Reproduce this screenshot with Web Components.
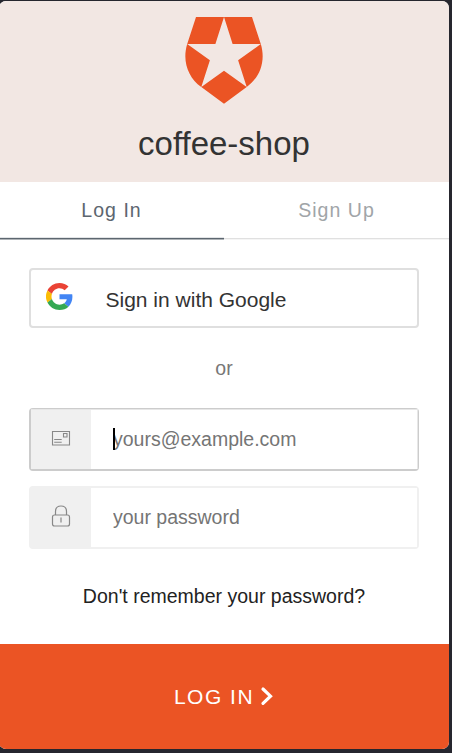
<!DOCTYPE html>
<html lang="en">
<head>
<meta charset="utf-8">
<title>coffee-shop</title>
<style>
html,body{margin:0;height:100%;overflow:hidden;background:#26262e}
body{font-family:"Liberation Sans",Arial,sans-serif;font-size:19.5px}
</style>
</head>
<body>
<login-card>
  <brand-header slot="header">coffee-shop</brand-header>
  <tab-bar slot="tabs"><tab-item active>Log In</tab-item><tab-item>Sign Up</tab-item></tab-bar>
  <google-button>Sign in with Google</google-button>
  <or-divider>or</or-divider>
  <icon-field focused placeholder="yours@example.com"><svg slot="icon" width="20" height="17" viewBox="0 0 20 17" fill="none" stroke="#888" stroke-width="1.1"><path d="M1.500 1.500h17v13.500h-17zM12.500 3.500h3.500v3.500h-3.500zM3.200 9.500h7.500M3.200 12.300h7.500"/></svg></icon-field>
  <icon-field placeholder="your password"><svg slot="icon" width="20" height="22" viewBox="0 0 20 22" fill="none" stroke="#888" stroke-width="1.2"><path d="M3 10h13.500q2 0 2 2v7q0 2-2 2H3.500q-2 0-2-2v-7q0-2 2-2zM4.500 10V6.500q0-5.500 5.500-5.500t5.500 5.500V10M10 12.500v5"/></svg></icon-field>
  <forgot-link>Don't remember your password?</forgot-link>
  <submit-bar slot="footer">LOG IN</submit-bar>
</login-card>
<script>
const define = (name, html) => customElements.define(name, class extends HTMLElement {
  constructor() {
    super();
    this.attachShadow({mode: "open"}).innerHTML = html;
  }
  connectedCallback() {
    const input = this.shadowRoot.querySelector("input");
    if (input) input.placeholder = this.getAttribute("placeholder");
  }
});
define("login-card", `<style>
:host{display:flex;flex-direction:column;box-sizing:border-box;width:450px;height:748px;margin:1px 0 0 -1px;background:#fff;border-radius:7px;overflow:hidden}
main{flex:1;display:flex;flex-direction:column;padding:28px 30px 0}
</style><slot name="header"></slot><slot name="tabs"></slot><main><slot></slot></main><slot name="footer"></slot>`);
define("brand-header", `<style>
:host{display:flex;flex-direction:column;align-items:center;height:181px;background:#f2e7e3;color:#333;font-size:33px;line-height:38px}
svg{display:block;margin:16px 0 21px}
</style><svg width="78" height="87" viewBox="0 0 78 87" fill="#eb5424"><path d="M11 0h28l-8.600 27H2.200zM39 0h28l8.800 27H47.600zM2.200 27L24.900 43.300 16.300 70C3 60.500-3 44 2.200 27zM75.800 27L53.100 43.300 61.700 70C75 60.500 81 44 75.800 27zM39 53.700L61.700 70 39 86.800 16.300 70z"/></svg><span><slot></slot></span>`);
define("tab-bar", `<style>:host{display:flex;height:58px}</style><slot></slot>`);
define("tab-item", `<style>
:host{display:flex;box-sizing:border-box;flex:1;align-items:center;justify-content:center;letter-spacing:1.05px;color:#a1a5a8;padding-bottom:2px;background:linear-gradient(#e0e0e0 50%,#f5f5f5 50%) bottom/100% 2px no-repeat}
:host([active]){color:#5c666f;background-image:linear-gradient(#e3e5e7 33.33%,#5c666f 33.33% 66.67%,#aeb3b7 66.67%);background-size:100% 3px}
</style><span><slot></slot></span>`);
define("google-button", `<style>
:host{display:flex;box-sizing:border-box;height:60px;flex:none;align-items:center;border:2px solid #dfdfdf;border-radius:4px;padding-left:15px;font-size:21px;color:#333}
svg{flex:none;margin-right:32.500px;margin-top:-3px}span{line-height:24px;margin-top:4px}
</style><svg width="27" height="27" viewBox="0 0 48 48"><path fill="#EA4335" d="M24 9.500c3.540 0 6.710 1.220 9.210 3.600l6.850-6.850C35.900 2.380 30.470 0 24 0 14.620 0 6.510 5.380 2.560 13.220l7.980 6.190C12.430 13.720 17.740 9.500 24 9.500z"/><path fill="#4285F4" d="M46.980 24.550c0-1.570-.15-3.090-.38-4.550H24v9.020h12.940c-.58 2.960-2.260 5.480-4.780 7.180l7.730 6c4.510-4.180 7.090-10.360 7.090-17.650z"/><path fill="#FBBC05" d="M10.530 28.590a14.500 14.500 0 0 1 0-9.180l-7.980-6.190a24 24 0 0 0 0 21.560z"/><path fill="#34A853" d="M24 48c6.480 0 11.930-2.130 15.890-5.810l-7.730-6c-2.150 1.450-4.920 2.300-8.160 2.300-6.260 0-11.570-4.220-13.470-9.910l-7.980 6.190C6.510 42.620 14.620 48 24 48z"/></svg><span><slot></slot></span>`);
define("or-divider", `<style>:host{display:flex;flex:none;height:80px;justify-content:center;align-items:center;color:#777}</style><span><slot></slot></span>`);
define("icon-field", `<style>
:host{display:flex;flex:none;box-sizing:border-box;position:relative;height:63px;border:2px solid #f0f0f0;border-radius:4px;margin-bottom:15px}
:host([focused]){border-color:#ccc}
:host([focused])::after{content:"";position:absolute;inset:-1px -1px 0 0;border-top:1px solid #fff8;border-right:1px solid #fff8}
.icon{display:flex;width:60px;box-sizing:border-box;padding-bottom:3px;align-items:center;justify-content:center;background:#f0f0f0}
:host([focused]) .icon{padding-bottom:2px}
input{flex:1;min-width:0;border:0;outline:0;background:#fff;padding:0 0 0 22px;font:19.5px "Liberation Sans",Arial,sans-serif}
input::placeholder{color:#757575;opacity:1}
.caret{display:none;position:absolute;left:82px;top:18px;width:2px;height:22px;background:#000}
:host([focused]) .caret{display:block}
</style><div class="icon"><slot name="icon"></slot></div><input><i class="caret"></i>`);
define("forgot-link", `<style>:host{display:flex;flex:none;justify-content:center;line-height:22px;margin-top:21px;color:#222}</style><span><slot></slot></span>`);
define("submit-bar", `<style>
:host{display:flex;height:105px;flex:none;align-items:center;justify-content:center;background:#eb5424;color:#fff;font-size:21px;letter-spacing:1.5px}
svg{margin-left:6px;margin-top:-2px}
</style><span><slot></slot></span><svg width="14" height="20" viewBox="0 0 14 20" fill="none" stroke="#fff" stroke-width="3.200" stroke-linecap="round"><path d="M3 3l7.500 7.200L3 17.300"/></svg>`);
</script>
</body>
</html>
